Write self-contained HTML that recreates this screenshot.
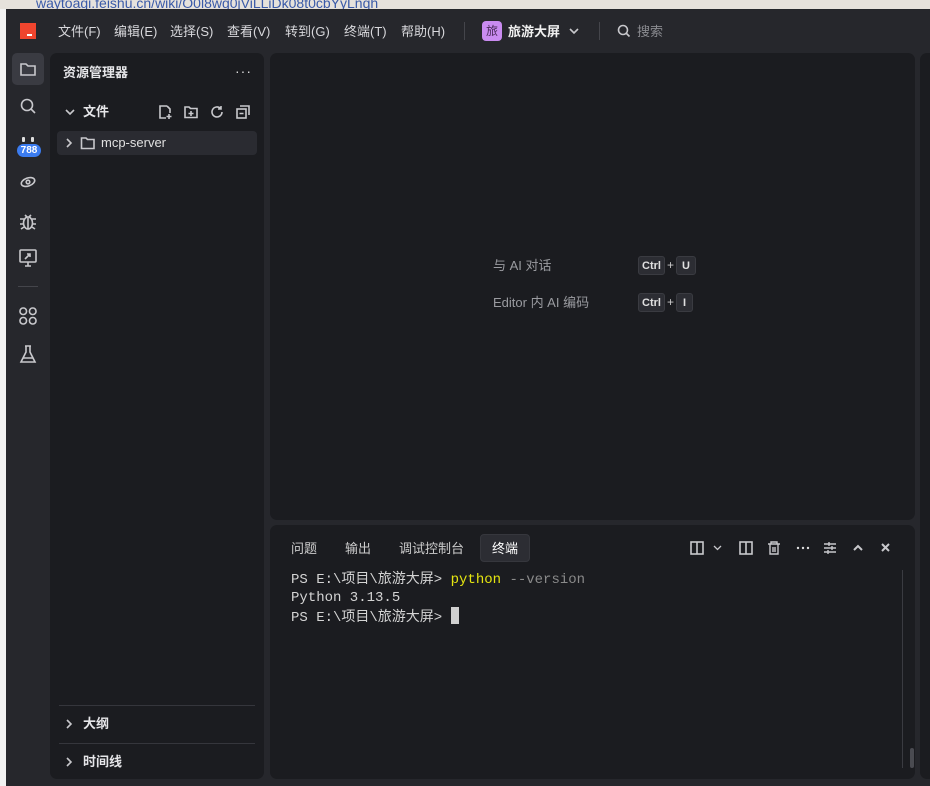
<!DOCTYPE html>
<html><head><meta charset="utf-8"><style>
*{margin:0;padding:0;box-sizing:border-box}
body{width:930px;height:786px;overflow:hidden;background:#26272c;font-family:"Liberation Sans","Noto Sans CJK SC",sans-serif;position:relative;color:#d4d4d8}
.abs{position:absolute}
.top{left:0;top:0;width:930px;height:9px;background:#e6e2dc;overflow:hidden;color:#3a5aa8;font-size:14px;line-height:6px;padding-left:36px}
.leftstrip{left:0;top:9px;width:6px;height:777px;background:#f2f2f2}
.win{left:6px;top:9px;width:924px;height:777px;background:#26272c}
.menu{top:21px;font-size:13px;color:#d8d8dc}
.panel{background:#1b1c20;border-radius:7px}
.ico{stroke:#c8c8cc;fill:none;stroke-width:1.6}
.t{font-size:13px;color:#e6e6e9}
.kbd{display:inline-block;background:#2c2d33;border:1px solid #3a3b41;border-radius:3px;font-size:11px;font-weight:bold;color:#e0e0e0;padding:1px 3px;height:19px;line-height:16px}
.term{font-family:"Liberation Mono","Noto Sans CJK SC",monospace;font-size:14px;color:#d4d4d4;line-height:18px}
</style></head><body>
<div class="abs top">waytoagi.feishu.cn/wiki/O0l8wg0jViLLiDk08t0cbYyLnqh</div>
<div class="abs leftstrip"></div>
<div class="abs win"></div>
<div class="abs" style="left:20px;top:23px;width:16px;height:16px;background:#f0452e"></div>
<div class="abs" style="left:27px;top:34px;width:5px;height:2px;background:#fff"></div>
<div class="abs menu" style="left:58px">文件(F)</div>
<div class="abs menu" style="left:114px">编辑(E)</div>
<div class="abs menu" style="left:170px">选择(S)</div>
<div class="abs menu" style="left:227px">查看(V)</div>
<div class="abs menu" style="left:285px">转到(G)</div>
<div class="abs menu" style="left:344px">终端(T)</div>
<div class="abs menu" style="left:401px">帮助(H)</div>
<div class="abs" style="left:464px;top:22px;width:1px;height:18px;background:#44454b"></div>
<div class="abs" style="left:482px;top:21px;width:20px;height:20px;border-radius:4px;background:#c98bf0;color:#4a2a5a;font-size:12px;text-align:center;line-height:20px">旅</div>
<div class="abs menu" style="left:508px;font-weight:bold;color:#f0f0f0">旅游大屏</div>
<svg class="abs" style="left:568px;top:26px" width="12" height="10"><path d="M2 3l4 4 4-4" class="ico" stroke="#888"/></svg>
<div class="abs" style="left:599px;top:22px;width:1px;height:18px;background:#44454b"></div>
<svg class="abs" style="left:617px;top:24px" width="14" height="14"><circle cx="6" cy="6" r="4.5" class="ico" stroke="#999"/><path d="M9.5 9.5l3 3" class="ico" stroke="#999"/></svg>
<div class="abs menu" style="left:637px;color:#8a8b90">搜索</div>

<div class="abs" style="left:12px;top:53px;width:32px;height:32px;border-radius:5px;background:#3a3b42"></div>
<svg class="abs" style="left:19px;top:61px" width="18" height="16"><path d="M2 3h5l2 2h7v9H2z" class="ico"/></svg>
<svg class="abs" style="left:19px;top:97px" width="18" height="18"><circle cx="8" cy="8" r="5.5" class="ico"/><path d="M12 12l4 4" class="ico"/></svg>
<div class="abs" style="left:22px;top:137px;width:3px;height:5px;background:#ddd;border-radius:1px"></div>
<div class="abs" style="left:31px;top:137px;width:3px;height:5px;background:#ddd;border-radius:1px"></div>
<div class="abs" style="left:17px;top:144px;width:24px;height:13px;border-radius:7px;background:#3b7cf0;color:#fff;font-size:10px;font-weight:bold;text-align:center;line-height:13px">788</div>
<svg class="abs" style="left:18px;top:173px" width="20" height="20"><ellipse cx="10" cy="9" rx="7" ry="4" class="ico" transform="rotate(-20 10 9)"/><circle cx="10" cy="9" r="1.8" class="ico"/></svg>
<svg class="abs" style="left:18px;top:211px" width="20" height="20"><ellipse cx="10" cy="12" rx="4.5" ry="6" class="ico"/><path d="M2 8h4M14 8h4M2 13h3.5M14.5 13h3.5M3 18l3-2M17 18l-3-2M7 4l2 2M13 4l-2 2M10 7v11" class="ico"/></svg>
<svg class="abs" style="left:18px;top:248px" width="20" height="20"><rect x="2" y="2" width="16" height="12" rx="1" class="ico"/><path d="M7 18h6M10 14v4M7 11l5-5M9 6h3v3" class="ico"/></svg>
<div class="abs" style="left:18px;top:286px;width:20px;height:1px;background:#44454b"></div>
<svg class="abs" style="left:18px;top:306px" width="20" height="20"><rect x="2" y="2" width="6.5" height="6.5" rx="3" class="ico"/><rect x="11.5" y="2" width="6.5" height="6.5" rx="3" class="ico"/><rect x="2" y="11.5" width="6.5" height="6.5" rx="3" class="ico"/><rect x="11.5" y="11.5" width="6.5" height="6.5" rx="3" class="ico"/></svg>
<svg class="abs" style="left:18px;top:344px" width="20" height="20"><path d="M7 2h6M8 2v6l-5 10h14l-5-10V2M5 14h10" class="ico"/></svg>

<div class="abs panel" style="left:50px;top:53px;width:214px;height:726px"></div>
<div class="abs t" style="left:63px;top:62px;font-weight:bold">资源管理器</div>
<div class="abs" style="left:235px;top:63px;font-size:14px;color:#ddd;letter-spacing:1px">···</div>
<svg class="abs" style="left:64px;top:106px" width="12" height="12"><path d="M2 4l4 4 4-4" class="ico" stroke="#ddd"/></svg>
<div class="abs t" style="left:83px;top:101px;font-weight:bold">文件</div>
<svg class="abs" style="left:157px;top:104px" width="16" height="16"><path d="M10 2H3v12h6M10 2l3 3v4M12 10v5M9.5 12.5h5" class="ico" stroke="#ddd"/></svg>
<svg class="abs" style="left:183px;top:104px" width="16" height="16"><path d="M2 3h4l1.5 1.5H14v9H2zM8 7v5M5.5 9.5h5" class="ico" stroke="#ddd"/></svg>
<svg class="abs" style="left:209px;top:104px" width="16" height="16"><path d="M13 8a5 5 0 1 1-1.5-3.6M12 2v3h-3" class="ico" stroke="#ddd"/></svg>
<svg class="abs" style="left:235px;top:104px" width="16" height="16"><rect x="2" y="5" width="9" height="9" class="ico" stroke="#ddd"/><path d="M5 2h9v9M4.5 9.5h4" class="ico" stroke="#ddd"/></svg>
<div class="abs" style="left:57px;top:131px;width:200px;height:24px;border-radius:4px;background:#2a2b31"></div>
<svg class="abs" style="left:64px;top:137px" width="10" height="12"><path d="M3 2l4 4-4 4" class="ico" stroke="#888" stroke-width="1.2"/></svg>
<svg class="abs" style="left:80px;top:136px" width="16" height="14"><path d="M1.5 2h4.5l1.5 1.5h6.5v9h-12.5z" class="ico" stroke="#999" stroke-width="1.3"/></svg>
<div class="abs t" style="left:101px;top:135px;color:#e0e0e0">mcp-server</div>
<div class="abs" style="left:59px;top:705px;width:196px;height:1px;background:#35363c"></div>
<svg class="abs" style="left:64px;top:718px" width="10" height="12"><path d="M3 2l4 4-4 4" class="ico" stroke="#ddd" stroke-width="1.4"/></svg>
<div class="abs t" style="left:83px;top:713px;font-weight:bold">大纲</div>
<div class="abs" style="left:59px;top:743px;width:196px;height:1px;background:#35363c"></div>
<svg class="abs" style="left:64px;top:756px" width="10" height="12"><path d="M3 2l4 4-4 4" class="ico" stroke="#ddd" stroke-width="1.4"/></svg>
<div class="abs t" style="left:83px;top:751px;font-weight:bold">时间线</div>

<div class="abs panel" style="left:270px;top:53px;width:645px;height:467px"></div>
<div class="abs" style="left:493px;top:255px;font-size:13px;color:#9a9ba0">与 AI 对话</div>
<div class="abs" style="left:638px;top:256px"><span class="kbd">Ctrl</span><span style="color:#ccc;font-size:12px;margin:0 2px">+</span><span class="kbd" style="padding:1px 5px">U</span></div>
<div class="abs" style="left:493px;top:292px;font-size:13px;color:#9a9ba0">Editor 内 AI 编码</div>
<div class="abs" style="left:638px;top:293px"><span class="kbd">Ctrl</span><span style="color:#ccc;font-size:12px;margin:0 2px">+</span><span class="kbd" style="padding:1px 6px">I</span></div>

<div class="abs panel" style="left:270px;top:525px;width:645px;height:254px"></div>
<div class="abs t" style="left:291px;top:538px;color:#ccc">问题</div>
<div class="abs t" style="left:345px;top:538px;color:#ccc">输出</div>
<div class="abs t" style="left:399px;top:538px;color:#ccc">调试控制台</div>
<div class="abs" style="left:480px;top:534px;width:50px;height:28px;border-radius:4px;background:#2c2d33;border:1px solid #36373d"></div>
<div class="abs t" style="left:492px;top:538px;color:#fff">终端</div>
<svg class="abs" style="left:690px;top:540px" width="210" height="16">
<g class="ico" stroke="#ddd"><rect x="1" y="2" width="12" height="12"/><path d="M7 2v12"/><path d="M24 6l3.5 3.5L31 6" stroke-width="1.3"/>
<rect x="50" y="2" width="12" height="12"/><path d="M56 2v12"/>
<path d="M78 4h12M81 4V2h6v2M80 4v10h8V4M83 7v5M85 7v5" stroke-width="1.4"/>
<path d="M134 4h12M134 8h12M134 12h12M139 2v4M142 6v4M138 10v4" stroke-width="1.4"/>
<path d="M164 10l4-4 4 4" stroke-width="2"/><path d="M192 4l7 7M199 4l-7 7" stroke-width="2"/></g>
<g fill="#ddd"><circle cx="108" cy="8" r="1.2"/><circle cx="113" cy="8" r="1.2"/><circle cx="118" cy="8" r="1.2"/></g></svg>
<div class="abs term" style="left:291px;top:571px">PS E:\项目\旅游大屏&gt; <span style="color:#e5e510">python</span> <span style="color:#8a8a8a">--version</span><br>Python 3.13.5<br>PS E:\项目\旅游大屏&gt; <span style="display:inline-block;width:8px;height:17px;background:#d0d0d0;vertical-align:-3px"></span></div>
<div class="abs" style="left:902px;top:570px;width:1px;height:198px;background:#3a3b41"></div>
<div class="abs" style="left:910px;top:748px;width:4px;height:20px;border-radius:2px;background:#4a4b51"></div>

<div class="abs panel" style="left:920px;top:53px;width:20px;height:726px"></div>
</body></html>
